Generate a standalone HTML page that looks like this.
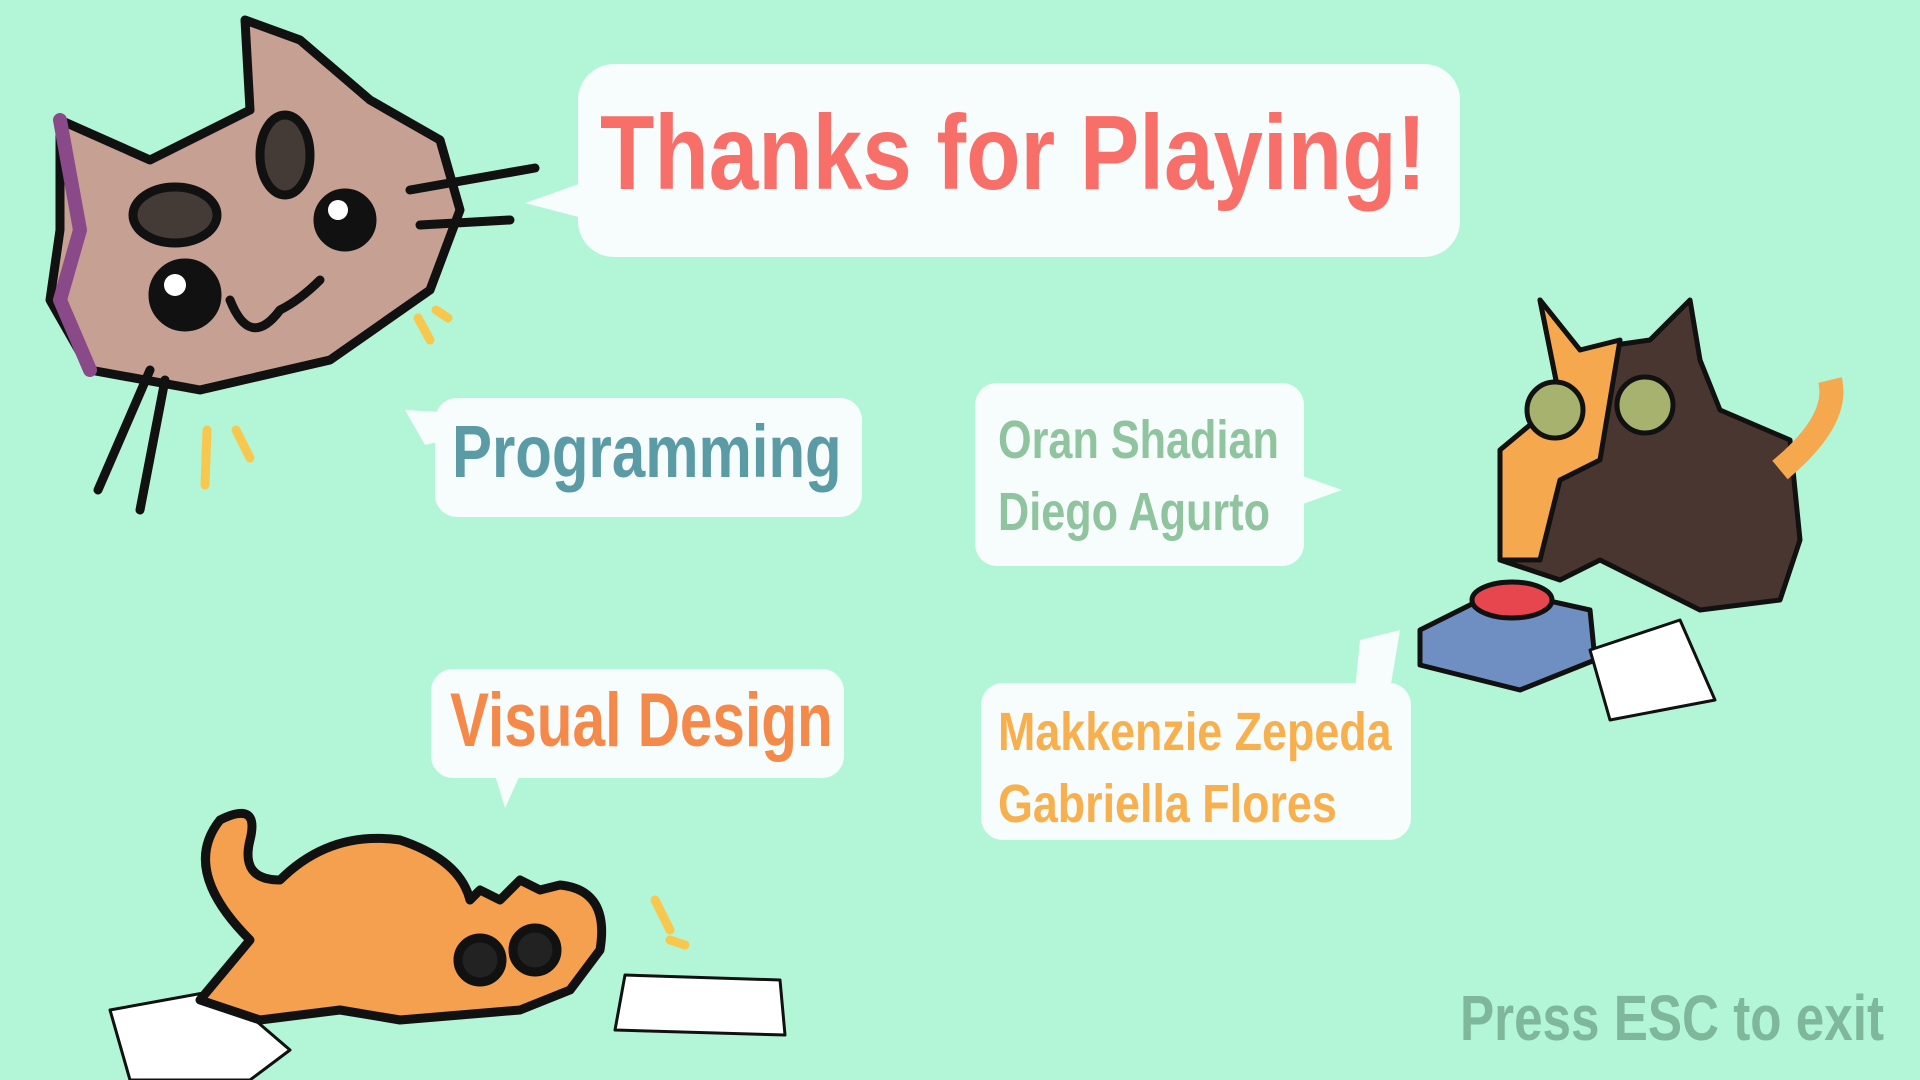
<!DOCTYPE html>
<html><head><meta charset="utf-8"><style>
html,body{margin:0;padding:0}
body{width:1920px;height:1080px;background:#b3f5d7;position:relative;overflow:hidden;font-family:"Liberation Sans",sans-serif;}
.b{position:absolute;background:#f7fdfc;border-radius:22px;}
.t{position:absolute;white-space:nowrap;font-weight:bold;line-height:1;transform-origin:0 0}
svg{position:absolute;left:0;top:0}
</style></head><body>
<svg width="1920" height="1080" viewBox="0 0 1920 1080">
 <path d="M590 180 L525 203 L590 220 Z" fill="#f7fdfc"/>
 <path d="M440 412 L405 410 L425 445 L445 440 Z" fill="#f7fdfc"/>
 <path d="M1300 475 L1342 490 L1300 505 Z" fill="#f7fdfc"/>
 <path d="M495 775 L505 808 L520 775 Z" fill="#f7fdfc"/>
 <path d="M1355 690 L1360 640 L1400 630 L1390 690 Z" fill="#f7fdfc"/>
 <g stroke="#111" stroke-width="9" stroke-linejoin="round" stroke-linecap="round">
  <path d="M60 120 L150 160 L250 110 L245 20 L300 40 L370 100 L440 140 L460 210 L430 290 L330 360 L200 390 L90 370 L50 300 L60 230 Z" fill="#c6a092"/>
  <path d="M60 120 L80 230 L60 300 L90 370" fill="none" stroke="#8a4a8a" stroke-width="14"/>
  <ellipse cx="285" cy="155" rx="25" ry="40" fill="#443a36"/>
  <ellipse cx="175" cy="215" rx="42" ry="28" fill="#443a36"/>
  <circle cx="185" cy="295" r="32" fill="#111"/>
  <circle cx="345" cy="220" r="27" fill="#111"/>
  <path d="M230 300 Q250 350 280 310 Q300 300 320 280" fill="none"/>
  <path d="M410 190 L535 168 M420 225 L510 220 M150 370 L98 490 M165 380 L140 510" fill="none"/>
 </g>
 <circle cx="175" cy="285" r="11" fill="#fff"/><circle cx="338" cy="210" r="10" fill="#fff"/>
 <path d="M418 318 L430 340 M436 310 L448 318 M207 430 L205 485 M236 430 L250 458" stroke="#f8c84e" stroke-width="9" stroke-linecap="round"/>
 <g stroke="#111" stroke-width="5" stroke-linejoin="round">
  <path d="M1540 300 L1560 400 L1500 450 L1500 560 L1560 580 L1600 560 L1700 610 L1780 600 L1800 540 L1790 440 L1720 410 L1700 360 L1690 300 L1650 340 L1580 350 Z" fill="#4a3630"/>
  <path d="M1540 300 L1580 350 L1620 340 L1600 460 L1560 480 L1540 560 L1500 560 L1500 450 L1560 400 Z" fill="#f5a84e"/>
  <path d="M1780 470 Q1840 420 1830 380" fill="none" stroke="#f5a84e" stroke-width="24"/>
  <circle cx="1555" cy="410" r="28" fill="#a6b26e"/><circle cx="1645" cy="405" r="28" fill="#a6b26e"/>
  <path d="M1420 630 L1500 590 L1590 610 L1595 660 L1520 690 L1420 665 Z" fill="#6f8fc2"/>
  <ellipse cx="1512" cy="600" rx="40" ry="18" fill="#e8464e"/>
  <path d="M1590 650 L1680 620 L1715 700 L1610 720 Z" fill="#fff" stroke-width="3"/>
 </g>
 <g stroke="#111" stroke-width="9" stroke-linejoin="round">
  <path d="M110 1010 L220 990 L290 1050 L250 1080 L130 1080 Z" fill="#fff" stroke-width="3"/>
  <path d="M625 975 L780 980 L785 1035 L615 1030 Z" fill="#fff" stroke-width="3"/>
  <path d="M250 940 Q180 870 220 820 Q260 800 250 840 Q240 880 280 880 Q330 830 400 840 Q460 860 470 900 L480 890 L500 900 L520 880 L540 890 L560 885 Q610 890 600 950 L570 990 L520 1010 L400 1020 L340 1010 L260 1020 L200 1000 Z" fill="#f5a04e"/>
  <circle cx="480" cy="960" r="22" fill="#222"/><circle cx="535" cy="950" r="22" fill="#222"/>
 </g>
 <path d="M655 900 L670 930 M670 940 L685 945" stroke="#f8c84e" stroke-width="9" stroke-linecap="round"/>
</svg>
<div class="b" style="left:578px;top:64px;width:882px;height:193px;border-radius:36px"></div>
<div class="t" style="left:600px;top:100px;font-size:106px;color:#f86f6a;transform:scaleX(0.84)">Thanks for Playing!</div>
<div class="b" style="left:435px;top:398px;width:427px;height:119px"></div>
<div class="t" style="left:452px;top:415px;font-size:74px;color:#5a9ba6;transform:scaleX(0.81)">Programming</div>
<div class="b" style="left:975px;top:383px;width:329px;height:183px"></div>
<div class="t" style="left:998px;top:404px;font-size:54px;color:#8fc49f;line-height:72px;transform:scaleX(0.8)">Oran Shadian<br>Diego Agurto</div>
<div class="b" style="left:431px;top:669px;width:413px;height:109px"></div>
<div class="t" style="left:450px;top:683px;font-size:76px;color:#f5894a;transform:scaleX(0.77)">Visual Design</div>
<div class="b" style="left:981px;top:683px;width:430px;height:157px"></div>
<div class="t" style="left:998px;top:696px;font-size:54px;color:#f8b04e;line-height:72px;transform:scaleX(0.83)">Makkenzie Zepeda<br>Gabriella Flores</div>
<div class="t" style="left:1460px;top:986px;font-size:64px;color:#7fb79a;transform:scaleX(0.8)">Press ESC to exit</div>
</body></html>
